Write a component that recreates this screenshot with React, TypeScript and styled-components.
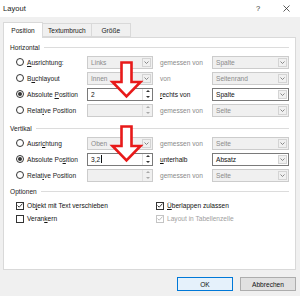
import styled, { createGlobalStyle } from "styled-components";

const GlobalStyle = createGlobalStyle`
  html, body {
    margin: 0;
    padding: 0;
    background: #f0f0f0;
  }
  body {
    font-family: "Liberation Sans", Arial, sans-serif;
  }
`;

const Window = styled.div`
  position: relative;
  width: 300px;
  height: 296px;
  background: #f0f0f0;
  color: #1a1a1a;
  font-size: 6.6px;
  overflow: hidden;
`;

const TitleBar = styled.div`
  height: 17px;
  background: #fff;
  display: flex;
  align-items: center;
  padding-left: 3px;
  font-size: 7.6px;
`;

const Title = styled.span`
  flex: 1;
`;

const TitleButton = styled.span`
  width: 28px;
  height: 17px;
  display: flex;
  align-items: center;
  justify-content: center;
  color: #333;
`;

const Body = styled.div`
  padding: 5px 4px 0 3px;
  display: flex;
  flex-direction: column;
`;

const TabBar = styled.div`
  display: flex;
  align-items: flex-end;
  height: 15px;
`;

const Tab = styled.div<{ $active?: boolean }>`
  position: relative;
  z-index: ${(p) => (p.$active ? 2 : 1)};
  min-width: 40px;
  padding: 0 5px;
  box-sizing: border-box;
  height: ${(p) => (p.$active ? "16px" : "14px")};
  margin-bottom: ${(p) => (p.$active ? "-1px" : "0")};
  margin-right: -1px;
  display: flex;
  align-items: center;
  justify-content: center;
  border: 1px solid #d9d9d9;
  border-bottom: ${(p) => (p.$active ? "none" : "1px solid #d9d9d9")};
  background: ${(p) => (p.$active ? "#fff" : "#f0f0f0")};
`;

const Panel = styled.div`
  position: relative;
  z-index: 1;
  height: 233px;
  box-sizing: border-box;
  border: 1px solid #d9d9d9;
  background: #fff;
  padding: 4px 6px 0;
`;

const GroupHeader = styled.div<{ $gap: number }>`
  margin-top: ${(p) => p.$gap}px;
  height: 10px;
  display: flex;
  align-items: center;
  gap: 4px;

  &::after {
    content: "";
    flex: 1;
    height: 1px;
    background: #dcdcdc;
  }
`;

const PositionGrid = styled.div`
  margin: 2px 0 0 6px;
  display: grid;
  grid-template-columns: 71px 66px 59px 77px;
  grid-auto-rows: 16px;
  align-items: center;
`;

const RadioLabel = styled.label`
  display: flex;
  align-items: center;
  gap: 3px;
  white-space: nowrap;
`;

const Radio = styled.span<{ $checked?: boolean }>`
  position: relative;
  width: 8px;
  height: 8px;
  box-sizing: border-box;
  border: 1px solid #333;
  border-radius: 50%;
  background: #fff;

  &::after {
    content: "";
    display: ${(p) => (p.$checked ? "block" : "none")};
    position: absolute;
    left: 1px;
    top: 1px;
    width: 4px;
    height: 4px;
    border-radius: 50%;
    background: #333;
  }
`;

const Key = styled.span`
  text-decoration: underline;
`;

const Field = styled.div<{ $enabled?: boolean }>`
  height: 13px;
  box-sizing: border-box;
  display: flex;
  align-items: stretch;
  border: 1px solid ${(p) => (p.$enabled ? "#7a7a7a" : "#cccccc")};
  background: ${(p) => (p.$enabled ? "#fff" : "#f0f0f0")};
  color: ${(p) => (p.$enabled ? "#111" : "#8a8a8a")};
`;

const FieldText = styled.span`
  flex: 1;
  display: flex;
  align-items: center;
  padding-left: 3px;
  white-space: nowrap;
`;

const Caret = styled.span`
  width: 1px;
  height: 8px;
  margin-left: 1px;
  background: #111;
`;

const DropButton = styled.span`
  width: 9px;
  margin: 1px;
  box-sizing: border-box;
  border: 1px solid #d4d4d4;
  background: #f0f0f0;
  display: flex;
  align-items: center;
  justify-content: center;
`;

const Spinner = styled.span`
  width: 9px;
  display: flex;
  flex-direction: column;
  border-left: 1px solid #e0e0e0;
`;

const SpinHalf = styled.span`
  flex: 1;
  display: flex;
  align-items: center;
  justify-content: center;
`;

const SideLabel = styled.span<{ $enabled?: boolean }>`
  padding-left: 7px;
  white-space: nowrap;
  color: ${(p) => (p.$enabled ? "#111" : "#8a8a8a")};
`;

const OptionsGrid = styled.div`
  margin: 3px 0 0 6px;
  display: grid;
  grid-template-columns: 140px 1fr;
  grid-auto-rows: 13px;
  align-items: center;
`;

const CheckLabel = styled.label<{ $disabled?: boolean }>`
  display: flex;
  align-items: center;
  gap: 3px;
  white-space: nowrap;
  color: ${(p) => (p.$disabled ? "#a0a0a0" : "#111")};
`;

const Box = styled.span<{ $disabled?: boolean }>`
  width: 8px;
  height: 8px;
  box-sizing: border-box;
  border: 1px solid ${(p) => (p.$disabled ? "#c4c4c4" : "#333")};
  background: #fff;
  display: flex;
  align-items: center;
  justify-content: center;
`;

const ButtonRow = styled.div`
  margin-top: 7px;
  display: flex;
  justify-content: flex-end;
  gap: 7px;
`;

const Button = styled.button<{ $default?: boolean }>`
  width: 56px;
  height: 14px;
  padding: 0;
  font: inherit;
  color: #111;
  border: 1px solid ${(p) => (p.$default ? "#0078d7" : "#adadad")};
  background: ${(p) => (p.$default ? "#e5f1fb" : "#e1e1e1")};
`;

const Overlay = styled.svg`
  position: absolute;
  left: 0;
  top: 0;
  z-index: 5;
  pointer-events: none;
`;

const Chevron = () => (
  <svg width="5" height="3" viewBox="0 0 5 3">
    <path d="M0.5 0.5 L2.5 2.5 L4.5 0.5" fill="none" stroke="#7a7a7a" strokeWidth="0.9" />
  </svg>
);

const Tri = ({ up, color }: { up?: boolean; color: string }) => (
  <svg width="4" height="2" viewBox="0 0 4 2">
    <path d={up ? "M0 2 L2 0 L4 2 Z" : "M0 0 L2 2 L4 0 Z"} fill={color} />
  </svg>
);

const Combo = ({ value, enabled }: { value: string; enabled?: boolean }) => (
  <Field $enabled={enabled}>
    <FieldText>{value}</FieldText>
    <DropButton>
      <Chevron />
    </DropButton>
  </Field>
);

const Spin = ({ value, enabled, caret }: { value?: string; enabled?: boolean; caret?: boolean }) => (
  <Field $enabled={enabled}>
    <FieldText>
      {value}
      {caret && <Caret />}
    </FieldText>
    <Spinner>
      <SpinHalf>
        <Tri up color={enabled ? "#333" : "#a8a8a8"} />
      </SpinHalf>
      <SpinHalf>
        <Tri color={enabled ? "#333" : "#a8a8a8"} />
      </SpinHalf>
    </Spinner>
  </Field>
);

const Check = ({ checked, disabled }: { checked?: boolean; disabled?: boolean }) => (
  <Box $disabled={disabled}>
    {checked && (
      <svg width="6" height="5" viewBox="0 0 6 5">
        <path d="M0.5 2.5 L2.2 4.2 L5.5 0.6" fill="none" stroke={disabled ? "#b4b4b4" : "#222"} strokeWidth="0.9" />
      </svg>
    )}
  </Box>
);

export default function App() {
  return (
    <>
      <GlobalStyle />
      <Window>
        <TitleBar>
          <Title>Layout</Title>
          <TitleButton>?</TitleButton>
          <TitleButton>
            <svg width="7" height="7" viewBox="0 0 7 7">
              <path d="M0.5 0.5 L6.5 6.5 M6.5 0.5 L0.5 6.5" stroke="#333" strokeWidth="0.8" />
            </svg>
          </TitleButton>
        </TitleBar>
        <Body>
          <TabBar>
            <Tab $active>Position</Tab>
            <Tab>Textumbruch</Tab>
            <Tab>Größe</Tab>
          </TabBar>
          <Panel>
            <GroupHeader $gap={0}>Horizontal</GroupHeader>
            <PositionGrid>
              <RadioLabel>
                <Radio />
                <span>
                  <Key>A</Key>usrichtung:
                </span>
              </RadioLabel>
              <Combo value="Links" />
              <SideLabel>gemessen von</SideLabel>
              <Combo value="Spalte" />

              <RadioLabel>
                <Radio />
                <span>
                  B<Key>u</Key>chlayout
                </span>
              </RadioLabel>
              <Combo value="Innen" />
              <SideLabel>von</SideLabel>
              <Combo value="Seitenrand" />

              <RadioLabel>
                <Radio $checked />
                <span>
                  Absolute <Key>P</Key>osition
                </span>
              </RadioLabel>
              <Spin value="2" enabled />
              <SideLabel $enabled>
                <Key>r</Key>echts von
              </SideLabel>
              <Combo value="Spalte" enabled />

              <RadioLabel>
                <Radio />
                <span>
                  Relat<Key>i</Key>ve Position
                </span>
              </RadioLabel>
              <Spin />
              <SideLabel>gemessen von</SideLabel>
              <Combo value="Seite" />
            </PositionGrid>

            <GroupHeader $gap={5}>Vertikal</GroupHeader>
            <PositionGrid>
              <RadioLabel>
                <Radio />
                <span>
                  Ausri<Key>c</Key>htung
                </span>
              </RadioLabel>
              <Combo value="Oben" />
              <SideLabel>gemessen von</SideLabel>
              <Combo value="Seite" />

              <RadioLabel>
                <Radio $checked />
                <span>
                  Absolute Po<Key>s</Key>ition
                </span>
              </RadioLabel>
              <Spin value="3,2" enabled caret />
              <SideLabel $enabled>
                <Key>u</Key>nterhalb
              </SideLabel>
              <Combo value="Absatz" enabled />

              <RadioLabel>
                <Radio />
                <span>
                  Relat<Key>i</Key>ve Position
                </span>
              </RadioLabel>
              <Spin />
              <SideLabel>gemessen von</SideLabel>
              <Combo value="Seite" />
            </PositionGrid>

            <GroupHeader $gap={3}>Optionen</GroupHeader>
            <OptionsGrid>
              <CheckLabel>
                <Check checked />
                <span>
                  Ob<Key>j</Key>ekt mit Text verschieben
                </span>
              </CheckLabel>
              <CheckLabel>
                <Check checked />
                <span>
                  <Key>Ü</Key>berlappen zulassen
                </span>
              </CheckLabel>
              <CheckLabel>
                <Check />
                <span>
                  Veran<Key>k</Key>ern
                </span>
              </CheckLabel>
              <CheckLabel $disabled>
                <Check checked disabled />
                <span>Layout in Tabellenzelle</span>
              </CheckLabel>
            </OptionsGrid>
          </Panel>
          <ButtonRow>
            <Button $default>OK</Button>
            <Button>Abbrechen</Button>
          </ButtonRow>
        </Body>
        <Overlay width="300" height="296" viewBox="0 0 300 296">
          <polygon
            points="121.5,62.5 131.5,62.5 131.5,82 140.5,82 126.5,96.5 112.5,82 121.5,82"
            fill="#fff"
            stroke="#e81a1a"
            strokeWidth="2.6"
            strokeLinejoin="miter"
          />
          <polygon
            points="121.5,126.5 131.5,126.5 131.5,146 140.5,146 126.5,160.5 112.5,146 121.5,146"
            fill="#fff"
            stroke="#e81a1a"
            strokeWidth="2.6"
            strokeLinejoin="miter"
          />
        </Overlay>
      </Window>
    </>
  );
}
